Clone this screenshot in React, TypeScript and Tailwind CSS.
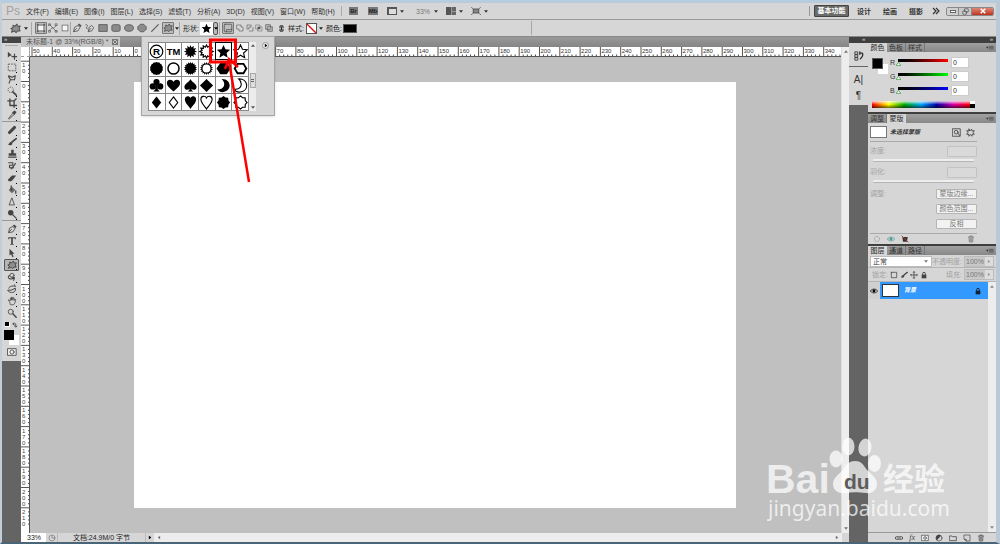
import React from "react";
import type { ReactNode } from "react";

const STROKE = {
  fill: "none",
  stroke: "currentColor",
  strokeWidth: 1,
  strokeLinecap: "round" as const,
  strokeLinejoin: "round" as const,
};

const BLOB =
  "M1 6 L3.4 5 L3.2 2.4 L5.6 3.4 L7.6 1.2 L8.6 3.6 L11.2 3.4 L10 5.8 L11 8.6 L8.4 8.4 L6.6 10.6 L5.2 8.8 L1.6 10 L2.8 7.4 Z";

const icons: Record<string, ReactNode> = {
  move: (
    <>
      <path d="M1 2 L6 6.5 L3.6 6.8 L1 9 Z" fill="currentColor" />
      <path d="M9 5v6M6 8h6" {...STROKE} strokeWidth={1.4} />
    </>
  ),
  marquee: <rect x="1.5" y="2.5" width="9" height="8" {...STROKE} strokeDasharray="2 1.3" strokeLinecap="butt" />,
  lasso: <path d="M2 2l4 2 4-2-1 5-5-.5-2-3zM4 7l-1.500 4" {...STROKE} strokeWidth={1.3} />,
  quick: (
    <>
      <circle cx="4.5" cy="4.5" r="3.2" {...STROKE} strokeDasharray="1.5 1.2" strokeLinecap="butt" />
      <path d="M7 7l4 4" {...STROKE} strokeWidth={2} />
    </>
  ),
  crop: <path d="M3.5 1v8h8M1 3.5h7.5V11M9 3l2-2" {...STROKE} strokeWidth={1.6} />,
  dropper: (
    <>
      <path d="M2 10l5-6 1.5 1.5L3 10.5z" {...STROKE} />
      <path d="M6 3l3-2.500 2.500 2L9 6z" fill="currentColor" />
    </>
  ),
  heal: <path d="M3 9l6-6" {...STROKE} strokeWidth={3.8} />,
  brush: (
    <>
      <path d="M6 6l5-4" {...STROKE} strokeWidth={2} />
      <path d="M1 9c2 0 1-3 4-3l1.500 1.500c0 3-4 3-5.500 1.500z" fill="currentColor" />
    </>
  ),
  stamp: <path d="M5 1h3v4h3v3H2V5h3zM1.500 9h10v1.500h-10z" fill="currentColor" />,
  history: (
    <>
      <path d="M2 2h5v3H3v3h5" {...STROKE} strokeWidth={1.3} />
      <path d="M4 10l6-8 1 1-5 7z" fill="currentColor" />
    </>
  ),
  eraser: <path d="M1 8l5-5h5L7 8l-2 2H2z" fill="currentColor" />,
  bucket: (
    <>
      <path d="M2 6l4-4 4 4-4 4z" fill="currentColor" opacity=".75" />
      <path d="M5 1v5M10.500 7v3" {...STROKE} strokeWidth={1.500} />
    </>
  ),
  blur: <path d="M6 1.500L9 9.500H3z" {...STROKE} />,
  burn: (
    <>
      <circle cx="4.500" cy="4.500" r="3.300" fill="currentColor" />
      <path d="M7 7l4 4" {...STROKE} strokeWidth={1.500} />
    </>
  ),
  pen: (
    <>
      <path d="M2 10l1-5 4-2 2.500 2.500L7.500 9zM2 10l3.500-3.500" {...STROKE} />
      <path d="M7 2L8.500 .500l3 2.500-1.500 2z" fill="currentColor" />
    </>
  ),
  freepen: (
    <>
      <path d="M4 10l1-5 3-2 2.500 2.500-2 3.500zM4 10l3-3.500" {...STROKE} />
      <path d="M1 2c3 0 2 2 1 3s0 2 1 2" {...STROKE} />
    </>
  ),
  type: <path d="M1.500 1.500h9V4h-1l-.5-1.300H7V9.500l1.300.4v.6H3.700v-.6L5 9.500V2.700H3L2.500 4h-1z" fill="currentColor" />,
  select: <path d="M3 1l6 6H6.500L8 10.500l-1.500.5L5 7.500 3 9z" fill="currentColor" />,
  blob: <path d={BLOB} fill="#8e8e8e" stroke="currentColor" strokeWidth="1.100" strokeLinejoin="round" />,
  rotate: (
    <>
      <circle cx="6" cy="4" r="2.500" {...STROKE} />
      <path d="M3 4c-4 3 1 6 6 3M6 6l3 1-1 3" {...STROKE} strokeWidth={1.300} />
    </>
  ),
  camera: <path d="M2 5c1-3 6-3 8-2L9 1M1 8c2 3 7 3 9 0V5L6 7z" {...STROKE} strokeWidth={1.200} />,
  hand: <path d="M3 7L1.500 5l1-.5L4 6V2.500l1-.5.500 3V1.500h1L7 5l.500-3 1 .2V5.500L9.500 4l1 .4-1 4L8 10.500H4.500z" {...STROKE} strokeWidth={0.9} />,
  zoom: (
    <>
      <circle cx="4.500" cy="4.500" r="3" {...STROKE} />
      <path d="M7 7l4 4" {...STROKE} strokeWidth={1.700} />
    </>
  ),
  shapeLayer: (
    <>
      <rect x="2.500" y="2.500" width="7" height="7" {...STROKE} fill="#f5f5f5" />
      <path d="M1 1h2v2H1zM9 1h2v2H9zM1 9h2v2H1zM9 9h2v2H9z" fill="currentColor" />
    </>
  ),
  paths: <path d="M2 2l8 8M2 9c2-5 5-1 8-6M1 1h2v2H1zM9 1h2v2H9zM1 9h2v2H1zM9 9h2v2H9z" {...STROKE} strokeWidth={0.8} />,
  fillPx: <rect x="2.500" y="2.500" width="7" height="7" fill="#f5f5f5" stroke="currentColor" strokeWidth=".8" />,
  rect: <rect x="1" y="2" width="10" height="8" fill="#8c8c8c" stroke="currentColor" />,
  rrect: <rect x="1" y="2" width="10" height="8" rx="2" fill="#8c8c8c" stroke="currentColor" />,
  ellipse: <ellipse cx="6" cy="6" rx="5.300" ry="4" fill="#8c8c8c" stroke="currentColor" />,
  poly: <path d="M4 1.500h4l3 3v3l-3 3H4l-3-3v-3z" fill="#8c8c8c" stroke="currentColor" />,
  line: <path d="M2 10l8-8" {...STROKE} strokeWidth={1.300} />,
  newShape: (
    <>
      <rect x="1.500" y="1.500" width="9" height="9" rx="1" {...STROKE} />
      <path d="M4 10.500V8h6.500" {...STROKE} />
    </>
  ),
  add: <path d="M1.500 1.500h6v3h3v6h-6v-3h-3z" {...STROKE} strokeWidth={0.9} />,
  subtract: <path d="M1.500 7.500v-6h6v3h-3v3zM5 10.500h5.500V5" {...STROKE} strokeWidth={0.9} strokeDasharray="3 1" />,
  intersect: (
    <>
      <path d="M1.500 1.500h6v6h-6zM4.500 4.500h6v6h-6z" {...STROKE} strokeWidth={0.7} />
      <path d="M4.500 4.500h3v3h-3z" fill="currentColor" />
    </>
  ),
  exclude: <path fillRule="evenodd" d="M1 1h7v7H1zM4 4h7v7H4z" fill="#bbb" stroke="currentColor" />,
  link: <path d="M4 5V2.500h4V5M4 7v2.500h4V7M6 4v4" {...STROKE} strokeWidth={1.300} />,
  eye: (
    <>
      <path d="M.500 6C3 2 9 2 11.500 6 9 10 3 10 .500 6z" {...STROKE} />
      <circle cx="6" cy="6" r="2.200" fill="currentColor" />
    </>
  ),
  trash: <path d="M2 3h8M4.500 3V1.500h3V3M3 4l.500 6.500h5L9 4M5 5v4M7 5v4" {...STROKE} />,
  lock: (
    <>
      <path d="M2.500 5.500h7V11h-7z" fill="currentColor" />
      <path d="M4 5.500V4a2 2 0 0 1 4 0v1.500" {...STROKE} strokeWidth={1.400} />
    </>
  ),
  square: <rect x="2" y="2" width="8" height="8" {...STROKE} strokeDasharray="2 .6" />,
  moveAll: <path d="M6 1v10M1 6h10M5 2l1-1 1 1M5 10l1 1 1-1M2 5L1 6l1 1M10 5l1 1-1 1" {...STROKE} strokeWidth={1.200} />,
  maskBox: (
    <>
      <rect x="1" y="1" width="10" height="10" {...STROKE} />
      <circle cx="5.500" cy="5.500" r="2.500" {...STROKE} />
      <path d="M8 7l2 3" {...STROKE} />
    </>
  ),
  layerMask: (
    <>
      <rect x="1" y="2" width="10" height="8" {...STROKE} fill="#eee" />
      <circle cx="6" cy="6" r="2" {...STROKE} />
    </>
  ),
  vectorMask: <path d="M4 1.500L5 4l2.500-2.500L8 4l3-.500-1.500 2.500L11 8.500 8.500 8 8 11 6 8.500 4 11l-.5-3L1 8.500 2.500 6 1 3.500l2.500.500z" {...STROKE} />,
  ring: <circle cx="6" cy="6" r="3.800" {...STROKE} strokeDasharray="2 .6" />,
  clock: (
    <>
      <circle cx="6" cy="6" r="4.500" {...STROKE} />
      <path d="M6 3v3h3" {...STROKE} />
    </>
  ),
  noMask: (
    <>
      <path d="M2 3h8L9 10H3z" fill="#333" />
      <path d="M1 1l10 10" stroke="#b33" strokeWidth="1.300" />
    </>
  ),
  chain: <path d="M5 4H2.500a2 2 0 0 0 0 4H5M7 4h2.500a2 2 0 0 1 0 4H7M4 6h4" {...STROKE} strokeWidth={1.300} />,
  quickMask: (
    <>
      <rect x="1" y="2" width="10" height="8" {...STROKE} fill="#eee" />
      <circle cx="6" cy="6" r="2.500" {...STROKE} />
    </>
  ),
  adjust: (
    <>
      <circle cx="6" cy="6" r="4.500" {...STROKE} />
      <path d="M9.200 2.800A4.500 4.500 0 1 0 2.800 9.200z" fill="currentColor" />
    </>
  ),
  folder: <path d="M1 3h3.500l1 1H11v6H1z" {...STROKE} strokeWidth={1.200} />,
  page: <path d="M2 1.500h8.500v9H5L2 8zM2 8h3v2.500" {...STROKE} />,
  menu: (
    <>
      <path d="M0 4h4L2 7z" fill="currentColor" />
      <path d="M5 3.500h6M5 5.500h6M5 7.500h6" {...STROKE} strokeWidth={0.8} />
    </>
  ),
  historyPanel: (
    <>
      <path d="M1.500 1h3v3h-3zM1.500 4.500h3v3h-3zM1.500 8h3v3h-3z" {...STROKE} />
      <path d="M7 2.500h3c1 2 0 5-2.500 7M7 1v3" {...STROKE} strokeWidth={1.600} />
    </>
  ),
};

function Icon({ name, className = "size-[10px]" }: { name: string; className?: string }) {
  return (
    <svg viewBox="0 0 12 12" aria-hidden="true" className={"shrink-0 " + className}>
      {icons[name]}
    </svg>
  );
}

function Caret({ className = "" }: { className?: string }) {
  return (
    <svg viewBox="0 0 6 4" aria-hidden="true" className={"h-[3px] w-[4px] shrink-0 " + className}>
      <path d="M0 0h6L3 4z" fill="currentColor" />
    </svg>
  );
}

function Divider() {
  return <span className="h-[13px] w-px shrink-0 bg-[#a6a6a6]" />;
}

const menus = ["文件(F)", "编辑(E)", "图像(I)", "图层(L)", "选择(S)", "滤镜(T)", "分析(A)", "3D(D)", "视图(V)", "窗口(W)", "帮助(H)"];

function MenuBar() {
  return (
    <header className="flex h-4 shrink-0 items-center pl-[4px] pr-[2px] text-[#333]">
      <span className="w-[20px] text-[12px] leading-4 text-[#a3a3a3]">Ps</span>
      <nav className="flex w-[309px] justify-between">
        {menus.map((m) => (
          <button key={m} className="whitespace-nowrap">{m}</button>
        ))}
      </nav>
      <span className="ml-[6px] h-[10px] w-px bg-[#aaa]" />
      <button className="ml-[7px] h-[8px] w-[9px] bg-[#777] text-[6px] leading-[8px] font-bold text-[#222]">Br</button>
      <button className="ml-[10px] h-[8px] w-[10px] bg-[#777] text-[6px] leading-[8px] font-bold text-[#222]">Mb</button>
      <button aria-label="查看额外内容" className="ml-[9px] flex items-center gap-[3px]">
        <span className="block h-[8px] w-[10px] border border-l-2 border-t-2 border-[#555] bg-[#ddd]" />
        <Caret />
      </button>
      <button className="ml-[12px] flex w-[22px] items-center justify-between text-[#777]">
        33% <Caret className="text-[#333]" />
      </button>
      <button aria-label="排列文档" className="ml-[8px] flex items-center gap-[3px]">
        <span className="grid h-[8px] w-[10px] grid-cols-2 gap-px bg-[#999]">
          <span className="row-span-2 bg-[#555]" />
          <span className="bg-[#666]" />
          <span className="bg-[#666]" />
        </span>
        <Caret />
      </button>
      <button aria-label="屏幕模式" className="ml-[8px] flex items-center gap-[3px]">
        <svg viewBox="0 0 12 10" className="h-[8px] w-[10px]" aria-hidden="true">
          <path d="M0 0l2 2M12 0l-2 2M0 10l2-2M12 10l-2-2" stroke="#444" />
          <rect x="2.500" y="2.500" width="7" height="5" fill="#888" stroke="#444" />
        </svg>
        <Caret />
      </button>
      <div className="ml-auto flex items-center">
        <span className="h-[10px] w-px bg-[#999]" />
        <button className="ml-[4px] h-[12px] w-[35px] rounded-[1px] border border-[#444] bg-[#6b6b6b] leading-[10px] font-bold text-white">基本功能</button>
        <button className="ml-[8px] font-bold">设计</button>
        <button className="ml-[12px] font-bold">绘画</button>
        <button className="ml-[12px] font-bold">摄影</button>
        <button aria-label="更多工作区" className="ml-[9px] w-[8px]">
          <svg viewBox="0 0 8 8" className="size-[8px]" aria-hidden="true">
            <path d="M1 1l3 3-3 3M4 1l3 3-3 3" fill="none" stroke="#333" strokeWidth="1.200" />
          </svg>
        </button>
        <div className="ml-[6px] flex h-[9px] overflow-hidden rounded-[2px] border border-[#888]">
          <button aria-label="最小化" className="flex w-[12px] items-center justify-center border-r border-[#888] bg-[#cfcfcf]">
            <span className="h-[3px] w-[6px] border border-[#666] bg-white" />
          </button>
          <button aria-label="还原" className="flex w-[13px] items-center justify-center border-r border-[#888] bg-[#c8c8c8]">
            <svg viewBox="0 0 8 8" className="size-[7px]" aria-hidden="true">
              <path d="M3 1h4v3.500H3zM1 3.500h4V7H1z" fill="#eee" stroke="#555" />
            </svg>
          </button>
          <button aria-label="关闭" className="flex w-[21px] items-center justify-center bg-linear-to-b from-[#dd8573] to-[#bf3018]">
            <svg viewBox="0 0 8 8" className="size-[6px]" aria-hidden="true">
              <path d="M1 1l6 6M7 1L1 7" stroke="#fff" strokeWidth="2" />
            </svg>
          </button>
        </div>
      </div>
    </header>
  );
}

function Opt({ name, label, active = false }: { name: string; label: string; active?: boolean }) {
  return (
    <button
      aria-label={label}
      className={
        active
          ? "flex size-[12px] shrink-0 items-center justify-center rounded-[1px] border border-[#777] bg-[#bdbdbd]"
          : "flex size-[12px] shrink-0 items-center justify-center"
      }
    >
      <Icon name={name} />
    </button>
  );
}

const STAR = "M8 1l2.100 4.700 5 .5-3.800 3.400 1.100 5L8 12l-4.400 2.600 1.100-5L.900 6.200l5-.5z";

function OptionsBar() {
  return (
    <div className="flex h-[17px] shrink-0 items-center border-t border-[#9a9a9a] text-[#555]">
      <div className="flex w-[29px] items-center gap-[3px] pl-[8px]">
        <Icon name="blob" className="size-[11px]" />
        <Caret className="text-[#222]" />
      </div>
      <Divider />
      <div className="flex w-[38px] items-center pl-[3px]">
        <Opt name="shapeLayer" label="形状图层" active />
        <Opt name="paths" label="路径" />
        <Opt name="fillPx" label="填充像素" />
      </div>
      <Divider />
      <div className="flex w-[108px] items-center gap-px">
        <Opt name="pen" label="钢笔" />
        <Opt name="freepen" label="自由钢笔" />
        <Opt name="rect" label="矩形" />
        <Opt name="rrect" label="圆角矩形" />
        <Opt name="ellipse" label="椭圆" />
        <Opt name="poly" label="多边形" />
        <Opt name="line" label="直线" />
        <Opt name="blob" label="自定形状" active />
        <Caret className="text-[#222]" />
      </div>
      <Divider />
      <div className="flex w-[39px] items-center pl-[3px] whitespace-nowrap">
        <span className="w-[17px] text-[#222]">形状:</span>
        <button aria-label="当前形状" className="flex h-[13px] w-[13px] items-center justify-center bg-white">
          <svg viewBox="0 0 16 16" className="size-[11px]" aria-hidden="true"><path d={STAR} fill="#000" /></svg>
        </button>
        <button aria-label="打开形状列表" className="flex h-[13px] w-[5px] items-center justify-center rounded-[2px] border border-[#555] bg-[#bbb] text-black">
          <Caret className="w-[3px]" />
        </button>
      </div>
      <Divider />
      <div className="flex w-[55px] items-center justify-between px-[2px]">
        <Opt name="newShape" label="创建新的形状图层" active />
        <Icon name="add" className="size-[8px]" />
        <Icon name="subtract" className="size-[8px]" />
        <Icon name="intersect" className="size-[8px]" />
        <Icon name="exclude" className="size-[8px]" />
      </div>
      <div className="flex items-center whitespace-nowrap text-[#222]">
        <Icon name="link" className="mr-[2px] ml-[2px] size-[9px]" />
        <span className="w-[18px]">样式:</span>
        <button aria-label="样式" className="size-[11px] border border-[#555] bg-white">
          <svg viewBox="0 0 10 10" aria-hidden="true" className="size-[9px]"><path d="M0 0l10 10" stroke="#e01010" strokeWidth="1.500" /></svg>
        </button>
        <Caret className="mr-[3px] ml-[2px]" />
        <span className="w-[17px]">颜色:</span>
        <button aria-label="颜色" className="h-[9px] w-[14px] border border-[#555] bg-black" />
      </div>
      <span className="ml-[174px] h-[14px] w-px bg-[#a6a6a6]" />
    </div>
  );
}

const toolGroups: [string, string][][] = [
  [["move", "移动"], ["marquee", "矩形选框"], ["lasso", "套索"], ["quick", "快速选择"], ["crop", "裁剪"], ["dropper", "吸管"]],
  [["heal", "修复画笔"], ["brush", "画笔"], ["stamp", "仿制图章"], ["history", "历史记录画笔"], ["eraser", "橡皮擦"], ["bucket", "油漆桶"], ["blur", "模糊"], ["burn", "减淡"]],
  [["pen", "钢笔"], ["type", "文字"], ["select", "路径选择"], ["blob", "自定形状"], ["rotate", "3D 旋转"], ["camera", "3D 相机"], ["hand", "抓手"], ["zoom", "缩放"]],
];

function Toolbar() {
  return (
    <aside className="flex w-[19px] shrink-0 flex-col bg-[#646464]">
      <div className="h-[6px] bg-[#444] pl-[2px] text-[6px] leading-[5px] text-[#ddd]">»</div>
      <div className="flex flex-col bg-[#d6d6d6] pb-[3px] text-[#444]">
        <div className="mx-[3px] mt-[2px] mb-[3px] h-px bg-[#aaa]" />
        {toolGroups.map((g, i) => (
          <div key={i} className={i ? "flex flex-col items-center border-t border-[#999] pt-[2px]" : "flex flex-col items-center"}>
            {g.map(([name, label]) => (
              <button
                key={label}
                aria-label={label}
                className={
                  label === "自定形状"
                    ? "flex h-[12px] w-[15px] items-center justify-center rounded-[1px] border border-[#555] bg-[#b5b5b5]"
                    : "flex h-[12px] w-[15px] items-center justify-center"
                }
              >
                <Icon name={name} />
                {name !== "zoom" && <span className="-ml-px size-px self-end bg-black" />}
              </button>
            ))}
          </div>
        ))}
        <div className="flex h-[11px] items-center justify-between px-[3px]">
          <span className="size-[5px] border-r border-b border-white bg-black" />
          <svg viewBox="0 0 8 8" className="size-[6px]" aria-hidden="true">
            <path d="M1 2.500h4v4M3 .500L1 2.500l2 2M3 5l2 2 2-2" fill="none" stroke="#333" />
          </svg>
        </div>
        <div className="grid h-[16px] grid-cols-[2px_5px_5px_5px] grid-rows-[5px_5px_5px]">
          <button aria-label="背景色" className="col-start-3 col-end-5 row-start-2 row-end-4 bg-white" />
          <button aria-label="前景色" className="col-start-2 col-end-4 row-start-1 row-end-3 bg-black" />
        </div>
        <button aria-label="快速蒙版" className="flex h-[12px] items-center justify-center">
          <Icon name="quickMask" />
        </button>
      </div>
    </aside>
  );
}

const STEP = 20.3;

function HorizontalRuler() {
  const marks = Array.from({ length: 40 }, (_, i) => i - 5);
  return (
    <svg className="h-[10px] min-w-0 flex-1 bg-white" aria-hidden="true">
      {marks.map((m) => {
        const x = 103.500 + m * STEP;
        return (
          <g key={m}>
            <path d={`M${x} 0v10`} stroke="#444" strokeWidth=".9" />
            {[1, 2, 3, 4].map((k) => (
              <path key={k} d={`M${x + (k * STEP) / 5} 7.500v2.500`} stroke="#333" strokeWidth=".9" />
            ))}
            <text x={x + 1} y="6" fontSize="6" fill="#333">{Math.abs(m * 10)}</text>
          </g>
        );
      })}
      <path d="M0 9.500h2000" stroke="#555" />
    </svg>
  );
}

function VerticalRuler() {
  const marks = Array.from({ length: 23 }, (_, i) => i - 1);
  return (
    <svg className="w-[9px] shrink-0 bg-white" aria-hidden="true">
      {marks.map((m) => {
        const y = 24.500 + m * STEP;
        return (
          <g key={m}>
            <path d={`M0 ${y}h9`} stroke="#444" strokeWidth=".9" />
            {[1, 2, 3, 4].map((k) => (
              <path key={k} d={`M7 ${y + (k * STEP) / 5}h2`} stroke="#333" strokeWidth=".9" />
            ))}
            {String(Math.abs(m * 10)).split("").map((d, i) => (
              <text key={i} x="1" y={y + 6 + i * 6} fontSize="6" fill="#444">{d}</text>
            ))}
          </g>
        );
      })}
      <path d="M8.500 0v2000" stroke="#555" />
    </svg>
  );
}

function burst(points: number, inner: number) {
  const out: string[] = [];
  for (let i = 0; i < points * 2; i++) {
    const r = i % 2 ? inner : 7;
    const a = (Math.PI * i) / points - Math.PI / 2;
    out.push(`${(8 + r * Math.cos(a)).toFixed(2)},${(8 + r * Math.sin(a)).toFixed(2)}`);
  }
  return "M" + out.join("L") + "Z";
}

const HEART = "M8 14.500C5 11 1 9 1 5.200 1 1 6.500.800 8 4.200 9.500.800 15 1 15 5.200 15 9 11 11 8 14.500z";
const LONG_HEART = "M8 15C6.500 12 2 9 2 4.600 2 .600 6.800.600 8 3.200 9.200.600 14 .600 14 4.600 14 9 9.500 12 8 15z";
const MOON = "M6 1C16 .500 18 13 8 15 5 15.500 2.500 14 1.500 12 9 12.500 11 5.500 6 1z";

const shapes: { name: string; d?: string; outline?: boolean; node?: ReactNode }[] = [
  {
    name: "注册商标符号",
    node: (
      <>
        <circle cx="8" cy="8" r="6.700" fill="none" stroke="#000" strokeWidth="1.300" />
        <text x="8" y="11.700" textAnchor="middle" fontSize="10.500" fontWeight="700">R</text>
      </>
    ),
  },
  { name: "商标符号", node: <text x="8" y="11.500" textAnchor="middle" fontSize="10" fontWeight="700">TM</text> },
  { name: "十二角星", d: burst(12, 4.500) },
  { name: "十二角星边框", d: burst(12, 4.700), outline: true },
  { name: "五角星", d: STAR },
  { name: "五角星边框", d: STAR, outline: true },
  { name: "封印", d: burst(14, 6.500) },
  { name: "圆环", node: <circle cx="8" cy="8" r="5.900" fill="none" stroke="#000" strokeWidth="1.600" /> },
  { name: "太阳", d: burst(18, 5.400) },
  {
    name: "太阳边框",
    node: (
      <>
        <path d={burst(18, 5.200)} />
        <circle cx="8" cy="8" r="4.200" fill="#fff" />
      </>
    ),
  },
  { name: "六边形", d: "M4.500 2h7l4 6-4 6h-7l-4-6z" },
  { name: "六边形边框", node: <path d="M4.800 3h6.400l3 5-3 5H4.800l-3-5z" fill="none" stroke="#000" strokeWidth="2" /> },
  { name: "梅花", node: <><circle cx="8" cy="4.300" r="3.300" /><circle cx="4" cy="9" r="3.300" /><circle cx="12" cy="9" r="3.300" /><path d="M7 7h2l.500 5.500 2 2h-7l2-2z" /></> },
  { name: "红心", d: HEART },
  { name: "黑桃", node: <path d="M8 1C9 4 14.500 6 14.500 9.500c0 3.300-4 4-5.500 2 0 1.500 1 2.500 2 3H5c1-.5 2-1.500 2-3-1.500 2-5.500 1.300-5.500-2C1.500 6 7 4 8 1z" /> },
  { name: "方块", d: "M8 1l7 7-7 7-7-7z" },
  { name: "新月", d: MOON },
  { name: "新月边框", d: MOON, outline: true },
  { name: "菱形", d: "M8 1.500l5 6.500-5 6.500L3 8z" },
  { name: "菱形边框", d: "M8 2l4.500 6L8 14 3.500 8z", outline: true },
  { name: "心形", d: LONG_HEART },
  { name: "心形边框", d: LONG_HEART, outline: true },
  { name: "八角星", d: burst(8, 5.800) },
  { name: "八角星边框", d: burst(8, 5.500), outline: true },
];

function ShapePicker() {
  return (
    <div className="flex h-[80px] w-[134px] items-start border border-[#a5a5a5] bg-[#d6d6d6] pt-[5px] pl-[6px] shadow-sm">
      <div className="grid w-[101px] shrink-0 grid-cols-6 gap-px border border-[#888] bg-[#888]">
        {shapes.map((s) => (
          <button
            key={s.name}
            aria-label={s.name}
            className={
              s.name === "五角星"
                ? "flex h-[16px] items-center justify-center bg-white outline outline-black"
                : "flex h-[16px] items-center justify-center bg-white"
            }
          >
            <svg viewBox="0 0 16 16" className="size-[15px]" aria-hidden="true">
              {s.node ?? <path d={s.d} fill={s.outline ? "none" : "#000"} stroke={s.outline ? "#000" : "none"} strokeWidth="1.200" />}
            </svg>
          </button>
        ))}
      </div>
      <div className="flex h-[69px] w-[7px] flex-col items-center justify-between bg-[#ececec] py-[2px] text-[#555]">
        <Caret className="rotate-180" />
        <span className="mt-[26px] mb-auto flex h-[15px] w-[6px] flex-col items-center justify-center gap-px border border-[#aaa] bg-[#ddd]">
          <span className="h-px w-[3px] bg-[#666]" />
          <span className="h-px w-[3px] bg-[#666]" />
        </span>
        <Caret />
      </div>
      <button aria-label="形状选项" className="ml-[6px] flex size-[7px] items-center justify-center rounded-full border border-[#999] bg-[#eee]">
        <Caret className="-rotate-90 text-black" />
      </button>
    </div>
  );
}

function Workspace() {
  return (
    <main className="relative flex min-w-0 flex-1 flex-col">
      <div className="flex h-[10px] shrink-0 items-end bg-linear-to-b from-[#9a9a9a] to-[#858585]">
        <div className="flex h-[10px] items-center gap-[3px] bg-[#c6c6c6] pr-[2px] pl-[5px] leading-[10px] whitespace-nowrap text-[#555]">
          未标题-1 @ 33%(RGB/8) *
          <button aria-label="关闭文档" className="flex size-[6px] items-center justify-center border border-[#777]">
            <svg viewBox="0 0 6 6" className="size-[4px]" aria-hidden="true"><path d="M0 0l6 6M6 0L0 6" stroke="#444" /></svg>
          </button>
        </div>
      </div>
      <div className="flex min-h-0 flex-1">
        <div className="flex min-w-0 flex-1 flex-col">
          <div className="flex h-[10px] shrink-0">
            <div className="w-[9px] border-r border-b border-dashed border-[#999] bg-white" />
            <HorizontalRuler />
          </div>
          <div className="flex min-h-0 flex-1">
            <VerticalRuler />
            <div className="min-w-0 flex-1 overflow-hidden bg-[#c0c0c0] pt-[25px] pl-[104px]">
              <div className="h-[426px] w-[602px] bg-white" />
            </div>
          </div>
        </div>
        <div className="flex w-[8px] shrink-0 flex-col items-center justify-between border-l border-[#ddd] bg-[#ededed] py-[3px] text-[#777]">
          <Caret className="rotate-180" />
          <Caret />
        </div>
      </div>
      <footer className="flex h-[9px] shrink-0 items-center bg-[#d6d6d6] leading-[9px] text-[#222]">
        <span className="w-[25px] bg-white pl-[6px]">33%</span>
        <span className="flex w-[11px] justify-center text-[#777]"><Icon name="clock" className="size-[8px]" /></span>
        <span className="w-[89px] border-x border-[#bbb] text-center">文档:24.9M/0 字节</span>
        <button aria-label="状态选项" className="flex w-[8px] justify-center"><Caret className="-rotate-90 text-black" /></button>
        <span className="flex h-full flex-1 items-center justify-between bg-[#ededed] px-[3px] text-[#777]">
          <Caret className="rotate-90" />
          <Caret className="-rotate-90" />
        </span>
        <span className="w-[7px]" />
      </footer>
      <div className="absolute -top-px left-[120px] z-10"><ShapePicker /></div>
      <svg className="pointer-events-none absolute top-0 left-[180px] z-20 h-[150px] w-[60px]" viewBox="0 0 60 150" aria-hidden="true">
        <rect x="9.500" y="3" width="25" height="22" fill="none" stroke="#f00" strokeWidth="3" />
        <path d="M48 145L28 24M24 32l4-10 9 8" fill="none" stroke="#f00" strokeWidth="2.500" />
      </svg>
    </main>
  );
}

function Tabs({ tabs, active }: { tabs: string[]; active: string }) {
  return (
    <div className="flex h-[9px] shrink-0 bg-linear-to-b from-[#a0a0a0] to-[#888] leading-[9px]">
      {tabs.map((t) => (
        <button
          key={t}
          className={
            t === active
              ? "w-[19px] bg-[#d6d6d6] text-center text-[#222]"
              : "w-[19px] border-r border-[#777] text-center text-[#333]"
          }
        >
          {t}
        </button>
      ))}
      <Icon name="menu" className="mt-px mr-[2px] ml-auto size-[8px] text-[#333]" />
    </div>
  );
}

const channels = [
  { name: "R", bar: "h-[3px] bg-linear-to-r from-black to-[#f00]" },
  { name: "G", bar: "h-[3px] bg-linear-to-r from-black to-[#0f0]" },
  { name: "B", bar: "h-[3px] bg-linear-to-r from-black to-[#00f]" },
];

function ColorPanel() {
  return (
    <section className="shrink-0 bg-[#d6d6d6]">
      <Tabs tabs={["颜色", "色板", "样式"]} active="颜色" />
      <div className="h-[60px] pt-[3px] pl-[4px]">
        <div className="flex h-[44px]">
          <div className="mt-[3px] grid h-[16px] w-[18px] grid-cols-[6px_5px_5px] grid-rows-[6px_5px_5px]">
            <span className="col-start-2 col-end-4 row-start-2 row-end-4 bg-white" />
            <span className="col-start-1 col-end-3 row-start-1 row-end-3 border border-[#555] bg-black" />
          </div>
          <div>
            {channels.map((c) => (
              <label key={c.name} className="flex h-[14px] items-center text-[#333]">
                <span className="w-[8px]">{c.name}</span>
                <span className="flex w-[50px] flex-col">
                  <span className={c.bar} />
                  <svg viewBox="0 0 6 4" className="-ml-[2px] h-[4px] w-[5px]" aria-hidden="true"><path d="M3 0l3 4H0z" fill="#fff" stroke="#4a9a4a" /></svg>
                </span>
                <input defaultValue="0" className="ml-[3px] h-[11px] w-[18px] border border-[#ccc] bg-white pl-px leading-[9px]" />
              </label>
            ))}
          </div>
        </div>
        <div className="mt-[2px] flex h-[7px]">
          <div className="w-[98px] bg-[linear-gradient(to_bottom,rgba(255,255,255,.8),transparent_50%,rgba(0,0,0,.6)),linear-gradient(to_right,#f00,#ff0_17%,#0a0_33%,#0af_50%,#00a_66%,#d0a_83%,#f00)]" />
          <div className="w-[5px] border-t-3 border-white bg-black" />
        </div>
      </div>
    </section>
  );
}

function MaskPanel() {
  return (
    <section className="shrink-0 border-t-2 border-[#3f3f3f] bg-[#d6d6d6]">
      <Tabs tabs={["调整", "蒙版"]} active="蒙版" />
      <div className="flex h-[121px] flex-col pr-[19px] pl-[2px] text-[#a2a2a2]">
        <div className="flex h-[19px] items-center border-b border-[#aaa] text-[#333]">
          <span className="h-[12px] w-[17px] border border-[#777] bg-white" />
          <strong className="ml-[3px] text-[6px] italic">未选择蒙版</strong>
          <Icon name="maskBox" className="mr-[5px] ml-auto size-[9px]" />
          <Icon name="vectorMask" className="mr-[2px] size-[9px]" />
        </div>
        {["浓度:", "羽化:"].map((l) => (
          <label key={l} className="flex h-[21px] flex-col">
            <span className="flex h-[17px] items-center justify-between">
              {l}
              <input disabled className="mt-[2px] h-[11px] w-[30px] rounded-[1px] border border-[#c2c2c2] bg-[#d9d9d9]" />
            </span>
            <span className="mx-[3px] h-[3px] rounded-[1px] border-b border-[#b5b5b5] bg-[#eee]" />
          </label>
        ))}
        <div className="flex flex-1 justify-between pt-[5px]">
          <span>调整:</span>
          <div className="flex w-[41px] flex-col gap-[5px]">
            {["蒙版边缘...", "颜色范围...", "反相"].map((b) => (
              <button key={b} className="h-[10px] rounded-[1px] border border-[#b5b5b5] bg-[#f2f2f2] leading-[8px] text-[#777]">{b}</button>
            ))}
          </div>
        </div>
        <div className="flex h-[11px] items-center gap-[6px] border-t border-[#aaa] pl-[3px]">
          <Icon name="ring" className="size-[8px]" />
          <Icon name="eye" className="size-[8px] text-[#4a9a94]" />
          <Icon name="noMask" className="size-[8px]" />
          <Icon name="trash" className="mr-[2px] ml-auto size-[8px] text-[#666]" />
        </div>
      </div>
    </section>
  );
}

function Percent({ label }: { label: string }) {
  return (
    <label className="ml-auto flex items-center gap-[2px] whitespace-nowrap text-[#a2a2a2]">
      {label}
      <span className="flex h-[11px] items-center border border-[#bbb]">
        <input defaultValue="100%" className="w-[20px] bg-[#c8c8c8] pl-px text-[#777]" />
        <span className="flex h-full w-[8px] items-center justify-center bg-[#ddd]"><Caret className="-rotate-90" /></span>
      </span>
    </label>
  );
}

function LayersPanel() {
  return (
    <section className="flex min-h-0 flex-1 flex-col border-t-2 border-[#3f3f3f] bg-[#d6d6d6]">
      <Tabs tabs={["图层", "通道", "路径"]} active="图层" />
      <div className="flex h-[13px] shrink-0 items-center border-b border-[#b5b5b5] pr-[2px] pl-[2px]">
        <div className="flex h-[11px] w-[63px] items-center border border-[#bbb] bg-white pr-[3px] text-[#444]">
          <select aria-label="混合模式" className="flex-1 appearance-none pl-[2px] leading-[9px]">
            <option>正常</option>
          </select>
          <Caret className="text-[#777]" />
        </div>
        <Percent label="不透明度:" />
      </div>
      <div className="flex h-[14px] shrink-0 items-center gap-[2px] border-b border-[#b5b5b5] pr-[2px] pl-[4px] text-[#444]">
        <span className="text-[#a2a2a2]">锁定:</span>
        <Icon name="square" className="size-[8px]" />
        <Icon name="brush" className="size-[8px]" />
        <Icon name="moveAll" className="size-[8px]" />
        <Icon name="lock" className="size-[8px]" />
        <Percent label="填充:" />
      </div>
      <div className="flex min-h-0 flex-1">
        <div className="flex-1">
          <div className="flex h-[17px] items-center bg-[#3399ff] text-white">
            <span className="flex h-full w-[12px] items-center justify-center bg-[#d0d0d0] text-black"><Icon name="eye" className="size-[8px]" /></span>
            <span className="ml-[2px] h-[13px] w-[17px] border border-[#333] bg-white" />
            <strong className="ml-[5px] text-[6px] italic">背景</strong>
            <Icon name="lock" className="mr-[6px] ml-auto size-[8px] text-[#123]" />
          </div>
        </div>
        <div className="flex w-[8px] flex-col items-center justify-between bg-[#ededed] py-[3px] text-[#888]">
          <Caret className="rotate-180" />
          <Caret />
        </div>
      </div>
      <div className="flex h-[10px] shrink-0 items-center justify-end gap-[6px] border-t border-[#999] pr-[11px] text-[#444]">
        <Icon name="chain" className="size-[8px]" />
        <span className="font-['Liberation_Serif'] text-[8px] italic">fx</span>
        {["layerMask", "adjust", "folder", "page", "trash"].map((n) => (
          <Icon key={n} name={n} className="size-[8px]" />
        ))}
      </div>
    </section>
  );
}

function Dock() {
  return (
    <aside className="flex w-[147px] shrink-0 flex-col bg-[#646464]">
      <div className="flex h-[6px] shrink-0 justify-between bg-[#3f3f3f] pr-[3px] pl-[13px] text-[6px] leading-[5px] text-[#ddd]">
        <span>«</span>
        <span>»</span>
      </div>
      <div className="flex min-h-0 flex-1">
        <div className="w-[19px] shrink-0">
          <div className="flex h-[23px] items-center justify-center bg-[#d6d6d6] pt-[3px] text-[#333]">
            <Icon name="historyPanel" />
          </div>
          <div className="mt-px flex h-[38px] flex-col items-center gap-[5px] bg-[#d6d6d6] pt-[7px] text-[10px] leading-[11px] text-[#333]">
            <span>A|</span>
            <span>¶</span>
          </div>
        </div>
        <div className="flex min-w-0 flex-1 flex-col">
          <ColorPanel />
          <MaskPanel />
          <LayersPanel />
        </div>
      </div>
    </aside>
  );
}

function Watermark() {
  return (
    <svg className="pointer-events-none absolute right-[45px] bottom-[12px] z-30 h-[94px] w-[184px]" viewBox="0 0 184 94" role="img" aria-label="Baidu 经验">
      <g fill="#fff" fillOpacity=".72">
        <text x="-1" y="57" fontSize="41" fontWeight="700">Bai</text>
        <ellipse cx="69" cy="23" rx="6.500" ry="8.500" />
        <ellipse cx="81.500" cy="10.500" rx="6" ry="9" />
        <ellipse cx="98" cy="11.500" rx="6.500" ry="9" transform="rotate(10 98 11.500)" />
        <ellipse cx="107.500" cy="27.500" rx="6.500" ry="8.500" />
        <path d="M88 25c7 0 9 5 12 9 5 5 10 8 10 14 0 6-5 10-11 9-8-1-14-1-21 0-7 1-12-3-12-9 0-6 5-9 10-14 3-4 5-9 12-9z" />
        <text x="116" y="54" fontSize="31" fontWeight="700" fontFamily="Noto Sans CJK SC, sans-serif">经验</text>
        <text x="1" y="80" fontSize="21" fontFamily="Noto Sans, sans-serif">jingyan.baidu.com</text>
      </g>
      <text x="77" y="53" fontSize="21" fontWeight="700" fill="#5c5c5c">du</text>
    </svg>
  );
}

export default function App() {
  return (
    <div className="relative flex h-screen flex-col overflow-hidden border-t-3 border-r-4 border-b-2 border-l-2 border-t-[#b8cce0] border-r-[#b9c9d8] border-b-[#4a6478] border-l-[#c3ced8] bg-[#d6d6d6] font-['Liberation_Sans','Noto_Sans_CJK_SC',sans-serif] text-[7px] leading-[9px]">
      <MenuBar />
      <OptionsBar />
      <div className="flex min-h-0 flex-1 border-t border-[#888]">
        <Toolbar />
        <Workspace />
        <Dock />
      </div>
      <Watermark />
    </div>
  );
}
